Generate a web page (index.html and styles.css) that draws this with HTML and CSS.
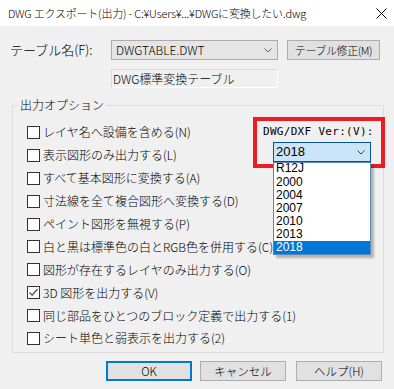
FILE: index.html
```html
<!DOCTYPE html>
<html lang="ja">
<head>
	<meta charset="UTF-8">
	<title>DWG エクスポート(出力)</title>
	<link rel="stylesheet" href="styles.css">
</head>
<body>
	<div class="titlebar">
		<span class="titlebar__text">DWG エクスポート(出力) - C:¥Users¥...¥DWGに変換したい.dwg</span>
		<svg class="titlebar__close" width="11" height="11" viewBox="0 0 11 11">
			<path d="M0.5 0.5 L10.5 10.5 M10.5 0.5 L0.5 10.5" stroke="#000" stroke-width="1" fill="none"/>
		</svg>
	</div>

	<div class="dialog">
		<div class="table-row">
			<span class="table-row__label">テーブル名(F):</span>
			<div class="combo">
				<span>DWGTABLE.DWT</span>
				<svg class="chevron" width="8" height="5" viewBox="0 0 8 5"><path d="M0.5 0.5 L4 4 L7.5 0.5" stroke="#606060" fill="none"/></svg>
			</div>
			<button class="btn btn--edit">テーブル修正(M)</button>
		</div>

		<div class="table-name">DWG標準変換テーブル</div>

		<fieldset class="group">
			<legend class="group__title">出力オプション</legend>
			<div class="options">
				<div class="checklist">
					<div class="check"><span class="check__box"></span>レイヤ名へ設備を含める(N)</div>
					<div class="check"><span class="check__box"></span>表示図形のみ出力する(L)</div>
					<div class="check"><span class="check__box"></span>すべて基本図形に変換する(A)</div>
					<div class="check"><span class="check__box"></span>寸法線を全て複合図形へ変換する(D)</div>
					<div class="check"><span class="check__box"></span>ペイント図形を無視する(P)</div>
					<div class="check"><span class="check__box"></span>白と黒は標準色の白とRGB色を併用する(C)</div>
					<div class="check"><span class="check__box"></span>図形が存在するレイヤのみ出力する(O)</div>
					<div class="check"><span class="check__box check__box--on"><svg width="11" height="11" viewBox="0 0 11 11"><path d="M1.5 5.5 L4.2 8.2 L9.5 2" stroke="#5c5c5c" stroke-width="1.4" fill="none"/></svg></span>3D 図形を出力する(V)</div>
					<div class="check"><span class="check__box"></span>同じ部品をひとつのブロック定義で出力する(1)</div>
					<div class="check"><span class="check__box"></span>シート単色と弱表示を出力する(2)</div>
				</div>

				<div class="version">
					<div class="version__label">DWG/DXF Ver:(V):</div>
					<div class="version__combo">
						<span>2018</span>
						<svg class="chevron" width="8" height="5" viewBox="0 0 8 5"><path d="M0.5 0.5 L4 4 L7.5 0.5" stroke="#404040" fill="none"/></svg>
						<ul class="droplist">
							<li class="droplist__item droplist__item--cut">R12J</li>
							<li class="droplist__item">2000</li>
							<li class="droplist__item">2004</li>
							<li class="droplist__item">2007</li>
							<li class="droplist__item">2010</li>
							<li class="droplist__item">2013</li>
							<li class="droplist__item droplist__item--selected">2018</li>
						</ul>
					</div>
				</div>
			</div>
		</fieldset>

		<div class="actions">
			<button class="btn btn--default">OK</button>
			<button class="btn btn--cancel">キャンセル</button>
			<button class="btn">ヘルプ(H)</button>
		</div>
	</div>
</body>
</html>
```

FILE: styles.css
```css
*, *::after, *::before {
	box-sizing: border-box;
}

body {
	margin: 0;
	width: 394px;
	height: 389px;
	overflow: hidden;
	background-color: #f0f0f0;
	font-family: "Noto Sans CJK JP", "Noto Sans", sans-serif;
	font-size: 12px;
	font-weight: 300;
	color: #000;
}

.titlebar {
	display: flex;
	justify-content: space-between;
	align-items: center;
	height: 26px;
	padding: 0 7px 0 8px;
	background-color: #fff;
}

.titlebar__text {
	font-size: 11px;
	line-height: 14px;
	letter-spacing: -0.2px;
	white-space: nowrap;
}

.dialog {
	padding-top: 14px;
}

.table-row {
	display: flex;
	align-items: center;
	height: 20px;
	padding-left: 10px;
}

.table-row__label {
	width: 101px;
	font-size: 13px;
	line-height: 14px;
}

.combo {
	display: flex;
	justify-content: space-between;
	align-items: center;
	width: 167px;
	height: 20px;
	padding: 0 5px 0 4px;
	border: 1px solid #acacac;
	background-color: #e5e5e5;
	line-height: 14px;
}

.chevron {
	display: block;
}

.btn {
	height: 20px;
	width: 86px;
	padding: 0;
	border: 1px solid #adadad;
	background-color: #e1e1e1;
	font-family: inherit;
	font-size: 11.5px;
	font-weight: 300;
	line-height: 14px;
	color: #000;
}

.btn--edit {
	width: 93px;
	margin-left: 9px;
	font-size: 11px;
	letter-spacing: -0.4px;
}

.btn--default {
	border: 2px solid #0078d7;
	margin-right: 8px;
}

.btn--cancel {
	margin-right: 10px;
}

.table-name {
	width: 167px;
	height: 19px;
	margin: 9px 0 0 111px;
	padding-left: 1px;
	border: 1px solid #d9d9d9;
	border-right-color: #fff;
	border-bottom-color: #fff;
	font-size: 12px;
	line-height: 17px;
}

.group {
	width: 372px;
	height: 255px;
	margin: 10px 0 0 12px;
	padding: 0;
	min-width: 0;
	border: 1px solid #dcdcdc;
}

.group__title {
	margin-left: 5px;
	padding: 0 2px;
	font-size: 12px;
	line-height: 14px;
}

.options {
	display: grid;
}

.checklist,
.version {
	grid-area: 1 / 1;
}

.checklist {
	padding: 9px 0 0 14px;
}

.check {
	display: flex;
	align-items: center;
	height: 22.9px;
	white-space: nowrap;
	line-height: 14px;
}

.check__box {
	display: flex;
	justify-content: center;
	align-items: center;
	flex: none;
	width: 13px;
	height: 13px;
	margin-right: 3px;
	border: 1px solid #333;
	background-color: #fff;
}

.version {
	justify-self: end;
	align-self: start;
	width: 132px;
	height: 51px;
	margin: 5px -2px 0 0;
	padding: 4px 0 0 6px;
	border: 4px solid #ed1c24;
	background-color: #f0f0f0;
}

.version__label {
	font-family: "DejaVu Sans Mono", "Liberation Mono", monospace;
	font-size: 11px;
	line-height: 14px;
	letter-spacing: 0.3px;
	white-space: nowrap;
}

.version__combo {
	position: relative;
	display: flex;
	justify-content: space-between;
	align-items: center;
	width: 98px;
	height: 20px;
	margin: 3px 0 0 10px;
	padding: 0 5px 0 2px;
	border: 1px solid #005499;
	background-color: #cce4f7;
	font-family: "Liberation Sans", sans-serif;
	font-size: 13px;
	font-weight: 400;
	line-height: 14px;
}

.droplist {
	position: absolute;
	z-index: 1;
	top: 19px;
	left: -1px;
	width: 98px;
	height: 93px;
	margin: 0;
	padding: 0;
	list-style: none;
	overflow: hidden;
	border: 1px solid #5b87b8;
	background-color: #fff;
	box-shadow: 3px 3px 2px rgba(0, 0, 0, 0.25);
	font-size: 12px;
}

.droplist__item {
	height: 13px;
	padding-left: 2px;
	line-height: 13px;
}

.droplist__item--cut {
	margin-top: -2px;
	height: 15px;
	line-height: 15px;
}

.droplist__item--selected {
	background-color: #0078d7;
	color: #fff;
}

.actions {
	display: flex;
	justify-content: flex-end;
	margin-top: 8px;
	padding-right: 12px;
}
```
